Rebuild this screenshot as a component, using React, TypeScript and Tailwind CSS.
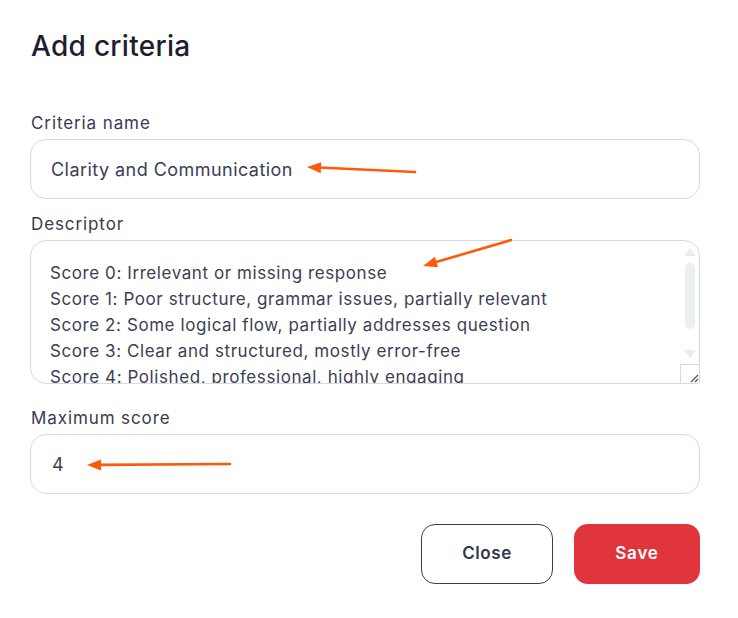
import React from "react";

// ─── Descriptor lines ─────────────────────────────────────────────────────────

const descriptor = [
  "Score 0: Irrelevant or missing response",
  "Score 1: Poor structure, grammar issues, partially relevant",
  "Score 2: Some logical flow, partially addresses question",
  "Score 3: Clear and structured, mostly error-free",
  "Score 4: Polished, professional, highly engaging",
];

// ─── Annotation arrows (overlay) ──────────────────────────────────────────────

function Arrow({ x1, y1, x2, y2 }: { x1: number; y1: number; x2: number; y2: number }) {
  const dx = x2 - x1;
  const dy = y2 - y1;
  const len = Math.hypot(dx, dy);
  const ux = dx / len;
  const uy = dy / len;
  const hl = 14;
  const hw = 5.5;
  const bx = x2 - ux * hl;
  const by = y2 - uy * hl;
  const pts = `${x2},${y2} ${bx - uy * hw},${by + ux * hw} ${bx + uy * hw},${by - ux * hw}`;
  return (
    <g>
      <line x1={x1} y1={y1} x2={bx + ux * 2} y2={by + uy * 2} stroke="#ff5a0a" strokeWidth={2.6} strokeLinecap="round" />
      <polygon points={pts} fill="#ff5a0a" />
    </g>
  );
}

function Arrows() {
  return (
    <svg className="pointer-events-none absolute left-0 top-0" width={738} height={618}>
      <Arrow x1={415} y1={172} x2={307} y2={167} />
      <Arrow x1={511} y1={240} x2={423} y2={266} />
      <Arrow x1={230} y1={464} x2={87} y2={465} />
    </svg>
  );
}

// ─── Fake scrollbar for the descriptor box ────────────────────────────────────

function Scrollbar() {
  return (
    <div className="flex w-[19px] shrink-0 flex-col items-center">
      <div className="mt-[7px] h-0 w-0 border-x-[6px] border-b-[8px] border-x-transparent border-b-[#e9ecf0]" />
      <div className="mt-[7px] h-[66px] w-[10px] rounded-full bg-[#eceff2]" />
      <div className="mt-[21px] h-0 w-0 border-x-[6px] border-t-[8px] border-x-transparent border-t-[#e9ecf0]" />
      <div className="mt-[6px] flex h-[19px] w-[19px] items-end justify-end border-l border-t border-[#d9dbe0]">
        <svg width="10" height="10" viewBox="0 0 10 10">
          <line x1="2" y1="9" x2="9" y2="2" stroke="#555" strokeWidth="1.2" />
          <line x1="6" y1="9" x2="9" y2="6" stroke="#555" strokeWidth="1.2" />
        </svg>
      </div>
    </div>
  );
}

// ─── Main ─────────────────────────────────────────────────────────────────────

export default function App() {
  return (
    <div
      className="relative h-[618px] w-[738px] overflow-hidden bg-white"
      style={{ fontFamily: "Inter, 'Open Sans', sans-serif" }}
    >
      <div className="w-[700px] pl-[30px] pt-[26px]">
        {/* Header */}
        <h1 className="pl-[1px] text-[28px] font-medium leading-[40px] tracking-[0.3px] text-[#1c1e30]">Add criteria</h1>

        {/* Criteria name */}
        <label className="mt-[45px] block pl-[1px] text-[17px] leading-[24px] tracking-[0.9px] text-[#383c4f]">Criteria name</label>
        <div className="mt-[4px] flex h-[60px] items-center rounded-[16px] border border-[#d6dbe3] px-[20px] text-[18px] tracking-[0.45px] text-[#3c4053]">
          Clarity and Communication
        </div>

        {/* Descriptor */}
        <label className="mt-[13px] block pl-[1px] text-[17px] leading-[24px] tracking-[0.9px] text-[#383c4f]">Descriptor</label>
        <div className="mt-[4px] flex h-[144px] overflow-hidden rounded-[16px] rounded-br-[3px] border border-[#d6dbe3]">
          <div className="flex-1 overflow-hidden pl-[19px] pt-[19px] text-[17px] leading-[26px] tracking-[0.58px] text-[#3c4053]">
            {descriptor.map((l) => (
              <div key={l} className="whitespace-nowrap">{l}</div>
            ))}
          </div>
          <Scrollbar />
        </div>

        {/* Maximum score */}
        <label className="mt-[22px] block pl-[1px] text-[17px] leading-[24px] tracking-[0.9px] text-[#383c4f]">Maximum score</label>
        <div className="mt-[4px] flex h-[60px] items-center rounded-[16px] border border-[#d6dbe3] px-[21px] text-[18px] text-[#3c4053]">
          4
        </div>

        {/* Actions */}
        <div className="mt-[30px] flex justify-end gap-[21px]">
          <button className="h-[60px] w-[132px] rounded-[14px] border border-[#3b3e4e] bg-white text-[17px] font-semibold tracking-[0.6px] text-[#33374a]">
            Close
          </button>
          <button className="h-[60px] w-[126px] rounded-[14px] bg-[#e0353c] text-[17px] font-semibold tracking-[0.8px] text-white">
            Save
          </button>
        </div>
      </div>

      <Arrows />
    </div>
  );
}
